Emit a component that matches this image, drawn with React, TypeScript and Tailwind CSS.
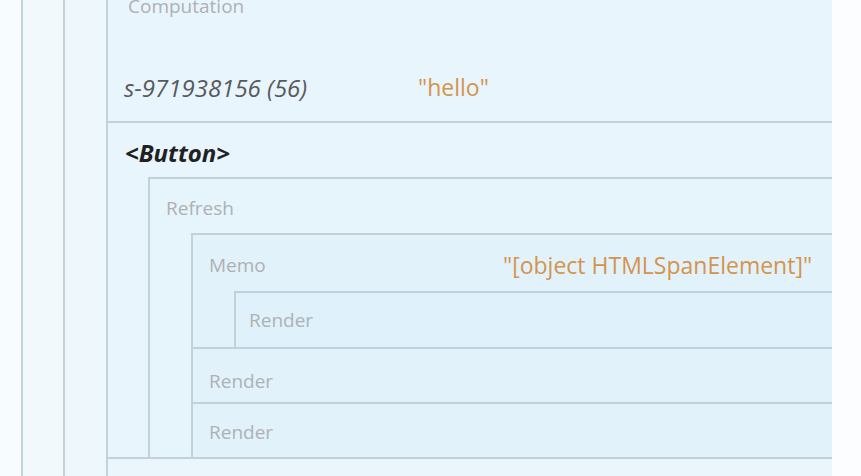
const font = { fontFamily: '"Open Sans", "Noto Sans", sans-serif' };

const Label = ({ children }: { children: React.ReactNode }) => (
  <span className="text-[19px] text-[#aeb1b3]">{children}</span>
);

const Value = ({ children }: { children: React.ReactNode }) => (
  <span className="text-[23px] text-[#d4944c]">{children}</span>
);

export default function App() {
  return (
    <div style={font} className="w-[861px] h-[476px] overflow-hidden bg-[#fbfdff] flex">
      <div className="w-[21px] shrink-0 bg-[#f7fcfe]" />
      <div className="w-[42px] shrink-0 border-l-2 border-[#c4d3da] bg-[#f1f9fd]" />
      <div className="w-[43px] shrink-0 border-l-2 border-[#c4d3da] bg-[#edf7fc]" />
      <div className="w-[726px] shrink-0 border-l-2 border-[#c4d3da] bg-[#e9f5fc] overflow-hidden flex flex-col">
        {/* Computation */}
        <div className="-mt-[20px] border-b-2 border-[#c1d1d8] shrink-0">
          <div className="h-[52px] flex items-center pl-[20px]">
            <Label>Computation</Label>
          </div>
          <div className="h-[89px] flex items-center pt-[22px] pl-[16px]">
            <span className="w-[294px] shrink-0 italic text-[24px] text-[#575a5c]">s-971938156 (56)</span>
            <Value>"hello"</Value>
          </div>
        </div>

        {/* Button */}
        <div className="border-b-2 border-[#c1d1d8] shrink-0">
          <div className="h-[54px] flex items-center pt-[6px] pl-[17px]">
            <span className="italic font-bold text-[24px] text-[#1f2123]">&lt;Button&gt;</span>
          </div>
          <div className="pl-[40px]">
            <div className="w-[800px] border-l-2 border-t-2 border-[#c1d1d8] bg-[#e6f4fc]">
              <div className="h-[54px] flex items-center pt-[4px] pl-[16px]">
                <Label>Refresh</Label>
              </div>
              <div className="pl-[41px]">
                <div className="border-l-2 border-t-2 border-[#c1d1d8] bg-[#e2f2fb]">
                  <div className="h-[56px] flex items-center pt-[4px] pl-[16px]">
                    <span className="w-[294px] shrink-0"><Label>Memo</Label></span>
                    <Value>"[object HTMLSpanElement]"</Value>
                  </div>
                  <div className="pl-[41px]">
                    <div className="border-l-2 border-t-2 border-[#c1d1d8] bg-[#dff1fb]">
                      <div className="h-[54px] flex items-center pl-[13px]">
                        <Label>Render</Label>
                      </div>
                    </div>
                  </div>
                </div>
                <div className="border-l-2 border-t-2 border-[#c1d1d8] bg-[#e2f2fb]">
                  <div className="h-[53px] flex items-center pt-[12px] pl-[16px]">
                    <Label>Render</Label>
                  </div>
                </div>
                <div className="border-l-2 border-t-2 border-[#c1d1d8] bg-[#e2f2fb]">
                  <div className="h-[53px] flex items-center pt-[4px] pl-[16px]">
                    <Label>Render</Label>
                  </div>
                </div>
              </div>
            </div>
          </div>
        </div>
        <div className="flex-1 bg-[#eaf6fc]" />
      </div>
    </div>
  );
}
